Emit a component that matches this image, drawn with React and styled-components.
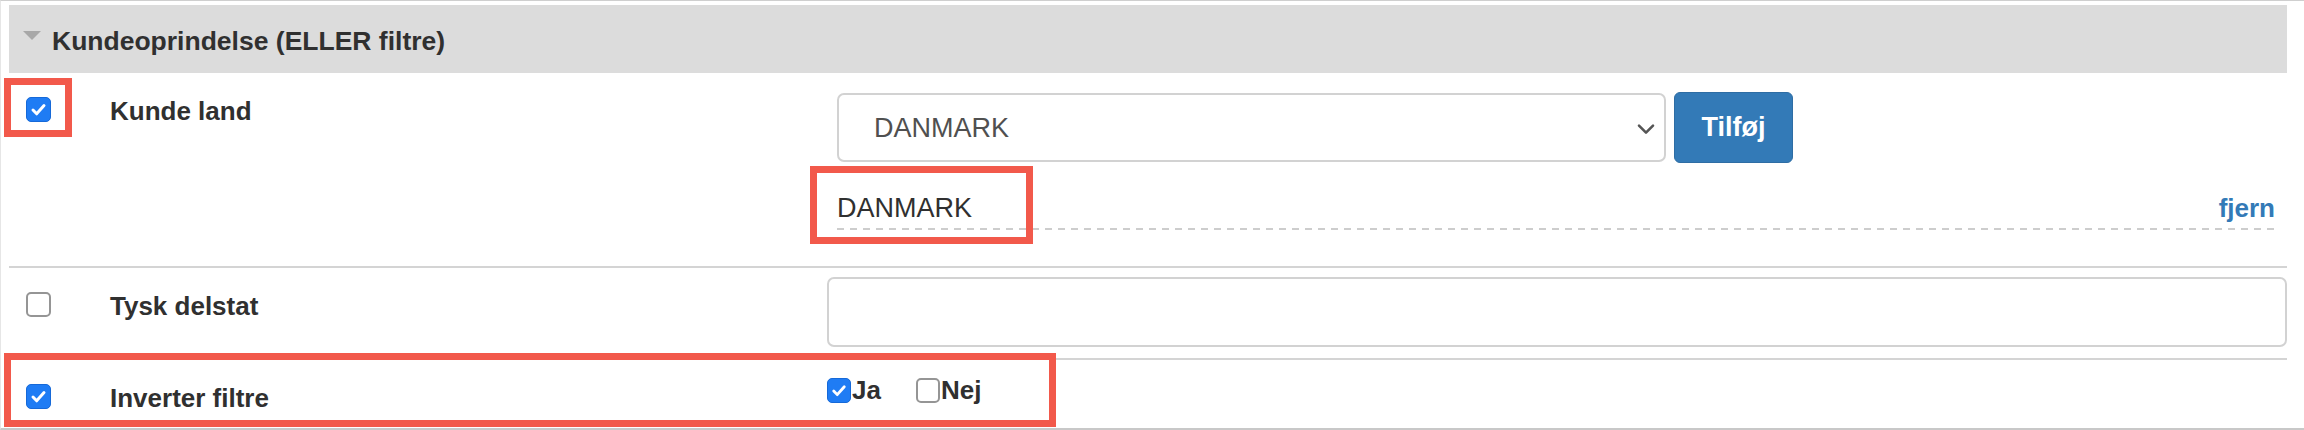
import React from "react";
import styled, { createGlobalStyle } from "styled-components";

const colours = {
  text: "#303030",
  muted: "#505050",
  header: "#dcdcdc",
  rule: "#d4d4d4",
  blue: "#337ab7",
  check: "#1f7cf4",
  mark: "#f2594b",
};

const GlobalStyle = createGlobalStyle`
  html, body {
    margin: 0;
    padding: 0;
    background: #fff;
  }
  body {
    font-family: "Liberation Sans", Arial, Helvetica, sans-serif;
    color: ${colours.text};
  }
`;

const Checkbox = ({ checked, small }) => (
  <StyledBox role="checkbox" aria-checked={checked} $checked={checked} $small={small}>
    {checked && (
      <svg width="100%" height="100%" viewBox="0 0 25 25">
        <polyline
          points="6.5,13 10.5,17.2 18.5,8.2"
          fill="none"
          stroke="#fff"
          strokeWidth="3.2"
          strokeLinecap="round"
          strokeLinejoin="round"
        />
      </svg>
    )}
  </StyledBox>
);

const FilterPanel = () => {
  return (
    <StyledFrame>
      <StyledHeader>
        <StyledCaret />
        <StyledTitle>Kundeoprindelse (ELLER filtre)</StyledTitle>
      </StyledHeader>

      <StyledRow>
        <StyledCheckCell>
          <Checkbox checked />
        </StyledCheckCell>
        <StyledLabel>Kunde land</StyledLabel>
        <StyledControl $pad="19px 12px 36px 10px">
          <StyledPickLine>
            <StyledSelectWrap>
              <StyledSelect defaultValue="DK">
                <option value="DK">DANMARK</option>
              </StyledSelect>
              <StyledChevron width="18" height="11" viewBox="0 0 18 11">
                <polyline
                  points="2,2 9,9 16,2"
                  fill="none"
                  stroke="#555"
                  strokeWidth="2.6"
                  strokeLinecap="round"
                  strokeLinejoin="round"
                />
              </StyledChevron>
            </StyledSelectWrap>
            <StyledButton type="button">Tilføj</StyledButton>
          </StyledPickLine>
          <StyledTagLine>
            <StyledTag>DANMARK</StyledTag>
            <StyledLink href="#">fjern</StyledLink>
          </StyledTagLine>
          <StyledDashed />
        </StyledControl>
      </StyledRow>

      <StyledRow>
        <StyledCheckCell>
          <Checkbox />
        </StyledCheckCell>
        <StyledLabel>Tysk delstat</StyledLabel>
        <StyledControl $pad="9px 0 11px 0">
          <StyledInput type="text" />
        </StyledControl>
      </StyledRow>

      <StyledRow $last>
        <StyledCheckCell>
          <Checkbox checked />
        </StyledCheckCell>
        <StyledLabel>Inverter filtre</StyledLabel>
        <StyledControl $pad="15px 0 0 0">
          <StyledOptions>
            <StyledOption>
              <Checkbox checked small />
              Ja
            </StyledOption>
            <StyledOption>
              <Checkbox small />
              Nej
            </StyledOption>
          </StyledOptions>
        </StyledControl>
      </StyledRow>

      <StyledMark $left={3} $top={77} $width={68} $height={59} />
      <StyledMark $left={809} $top={165} $width={223} $height={78} />
      <StyledMark $left={3} $top={352} $width={1052} $height={74} />
    </StyledFrame>
  );
};

const App = () => (
  <>
    <GlobalStyle />
    <FilterPanel />
  </>
);

const StyledFrame = styled.div`
  position: relative;
  width: 2304px;
  height: 430px;
  box-sizing: border-box;
  border-top: 1px solid #cfcfcf;
  border-left: 1px solid #e6e6e6;
  border-bottom: 2px solid #c8c8c8;
  padding: 4px 17px 0 8px;
  overflow: hidden;
`;

const StyledHeader = styled.div`
  display: flex;
  align-items: center;
  height: 68px;
  box-sizing: border-box;
  padding: 4px 0 0 14px;
  background: ${colours.header};
`;

const StyledCaret = styled.span`
  align-self: flex-start;
  margin-top: 22px;
  margin-right: 11px;
  width: 0;
  height: 0;
  border-left: 9px solid transparent;
  border-right: 9px solid transparent;
  border-top: 9px solid #a8a8a8;
`;

const StyledTitle = styled.h3`
  margin: 0;
  font-size: 26.5px;
  line-height: 30px;
  font-weight: 700;
  color: ${colours.text};
`;

const StyledRow = styled.div`
  display: grid;
  grid-template-columns: 101px 717px 1fr;
  align-items: start;
  min-height: ${(props) => (props.$last ? "68px" : "0")};
  border-bottom: ${(props) => (props.$last ? "none" : `2px solid ${colours.rule}`)};
`;

const StyledCheckCell = styled.div`
  padding: 24px 0 0 17px;
`;

const StyledBox = styled.span`
  display: inline-flex;
  flex: none;
  box-sizing: border-box;
  width: ${(props) => (props.$small ? "24px" : "25px")};
  height: 25px;
  border-radius: 5px;
  background: ${(props) => (props.$checked ? colours.check : "#fff")};
  border: ${(props) => (props.$checked ? `1px solid #1669d8` : "2px solid #959595")};
`;

const StyledLabel = styled.div`
  padding-top: 23px;
  font-size: 26px;
  line-height: 30px;
  font-weight: 700;
  color: ${colours.text};
`;

const StyledControl = styled.div`
  padding: ${(props) => props.$pad};
`;

const StyledPickLine = styled.div`
  display: flex;
  align-items: center;
  gap: 8px;
`;

const StyledSelectWrap = styled.div`
  position: relative;
  width: 829px;
`;

const StyledSelect = styled.select`
  appearance: none;
  display: block;
  width: 100%;
  height: 69px;
  box-sizing: border-box;
  padding: 0 40px 0 35px;
  border: 2px solid #d2d2d2;
  border-radius: 7px;
  background: #fff;
  font-family: "Liberation Sans", Arial, sans-serif;
  font-size: 27px;
  color: ${colours.muted};
`;

const StyledChevron = styled.svg`
  position: absolute;
  right: 11px;
  top: 50%;
  transform: translateY(-40%);
  pointer-events: none;
`;

const StyledButton = styled.button`
  width: 119px;
  height: 71px;
  border: 1px solid #2e6da4;
  border-radius: 6px;
  background: ${colours.blue};
  color: #fff;
  font-family: "Liberation Sans", Arial, sans-serif;
  font-size: 27px;
  font-weight: 700;
  padding: 0;
`;

const StyledTagLine = styled.div`
  display: flex;
  justify-content: space-between;
  align-items: baseline;
  margin-top: 30px;
  padding-bottom: 5px;
  line-height: 30px;
`;

const StyledTag = styled.span`
  font-size: 27px;
  color: ${colours.text};
`;

const StyledLink = styled.a`
  font-size: 26px;
  font-weight: 700;
  color: ${colours.blue};
  text-decoration: none;
`;

const StyledDashed = styled.div`
  height: 2px;
  background: repeating-linear-gradient(
    90deg,
    #cdcdcd 0 7px,
    transparent 7px 13px
  );
`;

const StyledInput = styled.input`
  display: block;
  width: 100%;
  height: 70px;
  box-sizing: border-box;
  border: 2px solid #d2d2d2;
  border-radius: 7px;
  background: #fff;
  outline: none;
`;

const StyledOptions = styled.div`
  display: flex;
  align-items: center;
  gap: 35px;
`;

const StyledOption = styled.label`
  display: flex;
  align-items: center;
  gap: 1px;
  font-size: 26px;
  line-height: 30px;
  font-weight: 700;
  color: ${colours.text};
`;

const StyledMark = styled.div`
  position: absolute;
  left: ${(props) => props.$left}px;
  top: ${(props) => props.$top}px;
  width: ${(props) => props.$width}px;
  height: ${(props) => props.$height}px;
  box-sizing: border-box;
  border: 7px solid ${colours.mark};
  pointer-events: none;
`;

export default App;
